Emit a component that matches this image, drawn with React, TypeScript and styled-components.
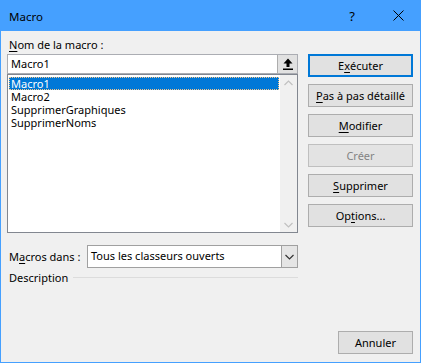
import React from "react";
import styled, { createGlobalStyle } from "styled-components";

const Global = createGlobalStyle`
  html, body { margin: 0; padding: 0; background: #f0f0f0; }
  body { font-family: "Noto Sans", "Segoe UI", sans-serif; font-size: 11px; color: #000; }
  * { box-sizing: border-box; }
`;

const Frame = styled.div`
  width: 421px;
  height: 363px;
  border: 1px solid #45a0ff;
  border-top: none;
  background: #f0f0f0;
  display: flex;
  flex-direction: column;
`;

const TitleBar = styled.div`
  height: 31px;
  margin: 0 -1px;
  background: #45a0ff;
  display: flex;
  align-items: center;
  padding-left: 9px;
  font-size: 11.5px;
  color: #000;
`;

const Title = styled.div`
  flex: 1;
  padding-top: 1px;
`;

const TitleIcon = styled.div`
  width: 46px;
  height: 31px;
  display: flex;
  align-items: center;
  justify-content: center;
  font-size: 13px;
`;

const Content = styled.div`
  flex: 1;
  display: flex;
  flex-direction: column;
  padding: 6px 7px 8px 6px;
`;

const MainRow = styled.div`
  display: flex;
  gap: 10px;
`;

const LeftCol = styled.div`
  width: 291px;
  display: flex;
  flex-direction: column;
`;

const Label = styled.div`
  line-height: 16px;
  height: 17px;
  padding-left: 2px;
  white-space: nowrap;
`;

const U = styled.span`
  text-decoration: underline;
  text-underline-offset: 2px;
`;

const InputRow = styled.div`
  height: 20px;
  display: flex;
  border: 1px solid #abadb3;
  background: #fff;
`;

const InputText = styled.div`
  flex: 1;
  padding-left: 3px;
  line-height: 18px;
`;

const ArrowBtn = styled.div`
  width: 20px;
  height: 18px;
  background: #e1e1e1;
  border-left: 1px solid #adadad;
  display: flex;
  align-items: center;
  justify-content: center;
`;

const ListBox = styled.div`
  height: 159px;
  border: 1px solid #828790;
  background: #fff;
  display: flex;
`;

const Items = styled.div`
  flex: 1;
  padding: 2px 1px 0 1px;
`;

const Item = styled.div<{ $sel?: boolean }>`
  height: 13px;
  line-height: 13px;
  padding-left: 2px;
  white-space: nowrap;
  background: ${(p) => (p.$sel ? "#0078d7" : "transparent")};
  color: ${(p) => (p.$sel ? "#fff" : "#000")};
  outline: ${(p) => (p.$sel ? "1px dotted #f5c68a" : "none")};
  outline-offset: -1px;
`;

const ScrollBar = styled.div`
  width: 17px;
  background: #f0f0f0;
  display: flex;
  flex-direction: column;
  justify-content: space-between;
  align-items: center;
  padding: 5px 0 4px;
`;

const SelectRow = styled.div`
  display: flex;
  align-items: center;
  margin-top: 12px;
  height: 23px;
`;

const SelectLabel = styled.div`
  width: 80px;
  padding-left: 2px;
  white-space: nowrap;
`;

const Select = styled.div`
  flex: 1;
  height: 23px;
  border: 1px solid #a0a0a0;
  background: #fff;
  display: flex;
`;

const SelectText = styled.div`
  flex: 1;
  padding-left: 3px;
  line-height: 20px;
`;

const SelectBtn = styled.div`
  width: 16px;
  background: #e5e5e5;
  border-left: 1px solid #a0a0a0;
  display: flex;
  align-items: center;
  justify-content: center;
`;

const DescRow = styled.div`
  display: flex;
  align-items: center;
  gap: 5px;
  margin-top: 1px;
  padding-left: 2px;
  height: 16px;
`;

const Rule = styled.div`
  flex: 1;
  height: 1px;
  background: #dcdcdc;
`;

const RightCol = styled.div`
  width: 105px;
  display: flex;
  flex-direction: column;
  gap: 7px;
  padding-top: 17px;
`;

const Button = styled.div<{ $default?: boolean; $disabled?: boolean; $w?: number }>`
  width: ${(p) => (p.$w ? `${p.$w}px` : "100%")};
  height: 23px;
  display: flex;
  align-items: center;
  justify-content: center;
  background: ${(p) => (p.$disabled ? "#e3e3e3" : "#e1e1e1")};
  border: ${(p) =>
    p.$default ? "2px solid #0078d7" : p.$disabled ? "1px solid #bfbfbf" : "1px solid #adadad"};
  color: ${(p) => (p.$disabled ? "#838383" : "#000")};
  white-space: nowrap;
`;

const Spacer = styled.div`
  flex: 1;
`;

const Footer = styled.div`
  display: flex;
  justify-content: flex-end;
`;

const Chevron = ({ up, color }: { up?: boolean; color: string }) => (
  <svg width="9" height="6" viewBox="0 0 9 6">
    <path
      d={up ? "M0.5 5 L4.5 1 L8.5 5" : "M0.5 1 L4.5 5 L8.5 1"}
      fill="none"
      stroke={color}
      strokeWidth="1.2"
    />
  </svg>
);

export default function App() {
  return (
    <>
      <Global />
      <Frame>
        <TitleBar>
          <Title>Macro</Title>
          <TitleIcon>?</TitleIcon>
          <TitleIcon>
            <svg width="11" height="11" viewBox="0 0 11 11">
              <path d="M0.5 0.5 L10.5 10.5 M10.5 0.5 L0.5 10.5" stroke="#000" strokeWidth="1" />
            </svg>
          </TitleIcon>
        </TitleBar>
        <Content>
          <MainRow>
            <LeftCol>
              <Label>
                <U>N</U>om de la macro :
              </Label>
              <InputRow>
                <InputText>Macro1</InputText>
                <ArrowBtn>
                  <svg width="10" height="12" viewBox="0 0 10 12">
                    <path d="M5 0.5 L9.5 5.5 L6.5 5.5 L6.5 9 L3.5 9 L3.5 5.5 L0.5 5.5 Z" fill="#000" />
                    <rect x="0" y="10.5" width="10" height="1.5" fill="#000" />
                  </svg>
                </ArrowBtn>
              </InputRow>
              <ListBox>
                <Items>
                  <Item $sel>Macro1</Item>
                  <Item>Macro2</Item>
                  <Item>SupprimerGraphiques</Item>
                  <Item>SupprimerNoms</Item>
                </Items>
                <ScrollBar>
                  <Chevron up color="#c0c0c0" />
                  <Chevron color="#c0c0c0" />
                </ScrollBar>
              </ListBox>
              <SelectRow>
                <SelectLabel>
                  M<U>a</U>cros dans :
                </SelectLabel>
                <Select>
                  <SelectText>Tous les classeurs ouverts</SelectText>
                  <SelectBtn>
                    <Chevron color="#333" />
                  </SelectBtn>
                </Select>
              </SelectRow>
              <DescRow>
                <span>Description</span>
                <Rule />
              </DescRow>
            </LeftCol>
            <RightCol>
              <Button $default>
                E<U>x</U>écuter
              </Button>
              <Button>
                <U>P</U>as à pas détaillé
              </Button>
              <Button>
                <U>M</U>odifier
              </Button>
              <Button $disabled>Créer</Button>
              <Button>
                <U>S</U>upprimer
              </Button>
              <Button>
                Op<U>t</U>ions...
              </Button>
            </RightCol>
          </MainRow>
          <Spacer />
          <Footer>
            <Button $w={75}>Annuler</Button>
          </Footer>
        </Content>
      </Frame>
    </>
  );
}
